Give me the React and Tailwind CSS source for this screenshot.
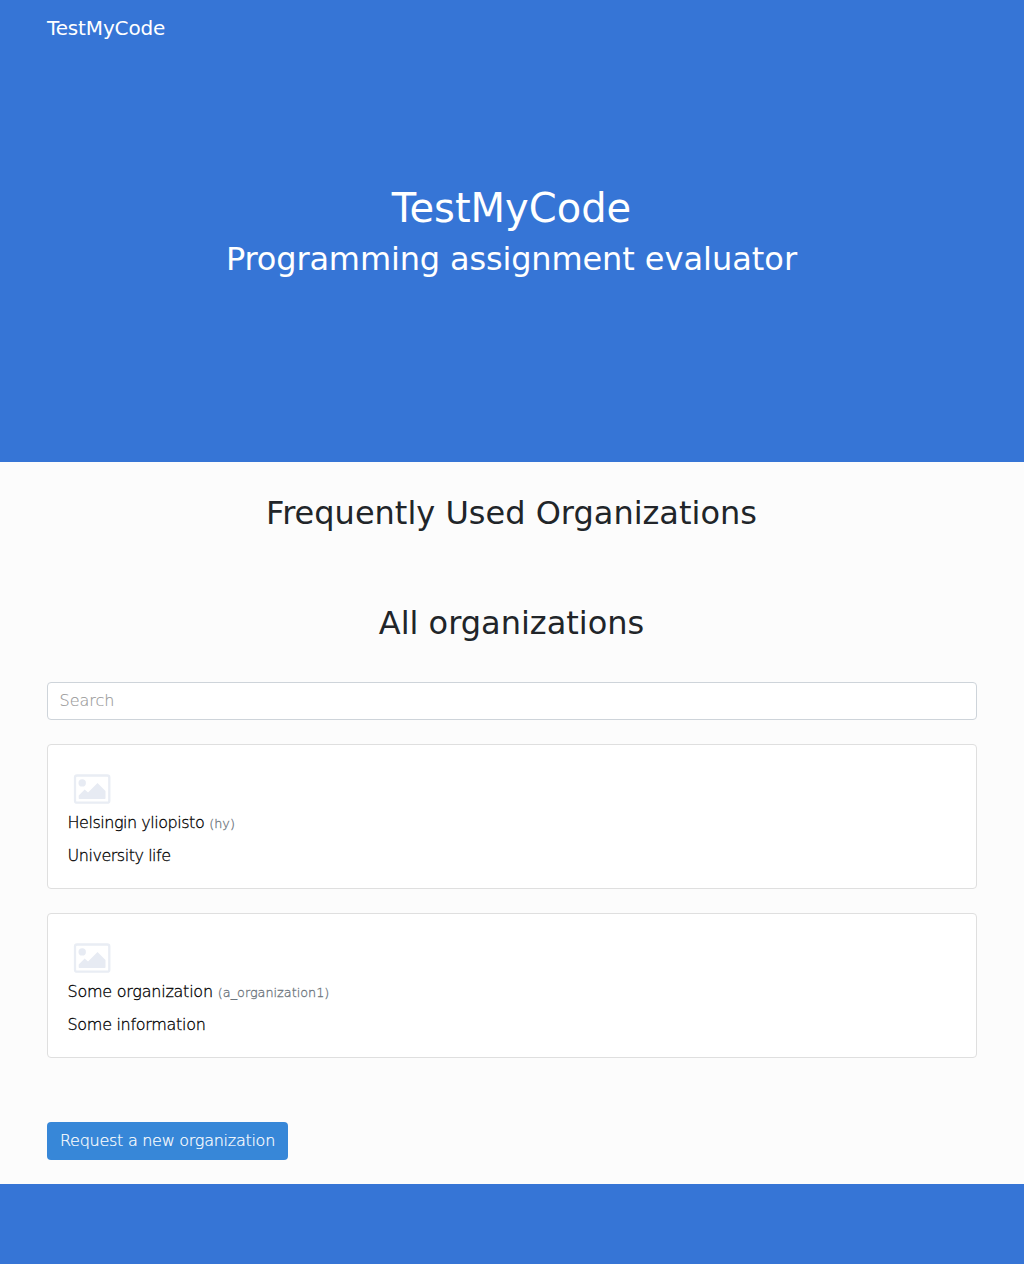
const organizations = [
  {
    name: "Helsingin yliopisto",
    slug: "hy",
    information: "University life",
    nameTracking: "tracking-[-0.47px]",
    informationTracking: "tracking-[-0.47px]",
  },
  {
    name: "Some organization",
    slug: "a_organization1",
    information: "Some information",
    nameTracking: "tracking-[-0.24px]",
    informationTracking: "tracking-[-0.3px]",
  },
];

function ImageIcon() {
  return (
    <svg className="-mb-[2px] block h-12 w-12" viewBox="0 0 48 48" fill="none">
      <rect x="7" y="10.500" width="34.300" height="27.200" rx="2" stroke="#e9edf4" strokeWidth="2.300" />
      <circle cx="14.200" cy="17.900" r="3.700" fill="#e7ebf3" />
      <path d="M10.700 33.700v-3.300l6-6 3.300 3 9.500-9.500 8 8v7.300q0 .8-.8.8H11.500q-.8 0-.8-.8z" fill="#e7ebf3" />
    </svg>
  );
}

function OrganizationCard({ name, slug, information, nameTracking, informationTracking }) {
  return (
    <article className="mb-6 h-[145px] rounded border border-[#dfdfdf] bg-white p-5">
      <ImageIcon />
      <p className="mb-2 -ml-[0.5px] flex h-[25px] items-baseline gap-[5px] text-base leading-6 text-black">
        <span className={`${nameTracking} [-webkit-text-stroke:0.3px]`}>{name}</span>
        <small className="text-[12.8px] text-[#6c757d] [-webkit-text-stroke:0.3px]">({slug})</small>
      </p>
      <p className={`${informationTracking} -ml-[0.5px] text-base leading-6 text-black [-webkit-text-stroke:0.3px]`}>{information}</p>
    </article>
  );
}

export default function App() {
  return (
    <div className="flex min-h-[1264px] flex-col bg-[#3675d6] font-['DejaVu_Sans',sans-serif] font-extralight">
      <nav className="h-14 px-[47px] pt-[13px]">
        <a className="text-xl leading-[30px] font-normal tracking-[-0.15px] text-white">TestMyCode</a>
      </nav>
      <header className="h-[406px] pt-32 text-center font-normal text-white">
        <h1 className="mb-2 pr-px text-[40px] leading-12">TestMyCode</h1>
        <h2 className="pr-px text-[32px] leading-[38px]">
          <span className="tracking-[-0.15px]">Programming assignment</span> evaluator
        </h2>
      </header>
      <main className="h-[722px] bg-[#fcfcfc] px-[47px] pt-8">
        <h2 className="mb-[72px] pr-px text-center text-[32px] leading-[38px] font-normal text-[#212529]">Frequently Used Organizations</h2>
        <h2 className="mb-10 pr-px text-center text-[32px] leading-[38px] font-normal text-[#212529]">All organizations</h2>
        <input
          placeholder="Search"
          className="mb-6 block h-[38px] w-full rounded border border-[#ced4da] bg-white px-[11.5px] pb-[2px] text-base placeholder:text-[#999999] [-webkit-text-stroke:0.15px]"
        />
        {organizations.map((organization) => (
          <OrganizationCard key={organization.slug} {...organization} />
        ))}
        <button className="mt-10 h-[38px] w-[241px] rounded bg-[#3787d8] text-base tracking-[-0.27px] text-white [-webkit-text-stroke:0.2px]">
          Request a new organization
        </button>
      </main>
    </div>
  );
}
